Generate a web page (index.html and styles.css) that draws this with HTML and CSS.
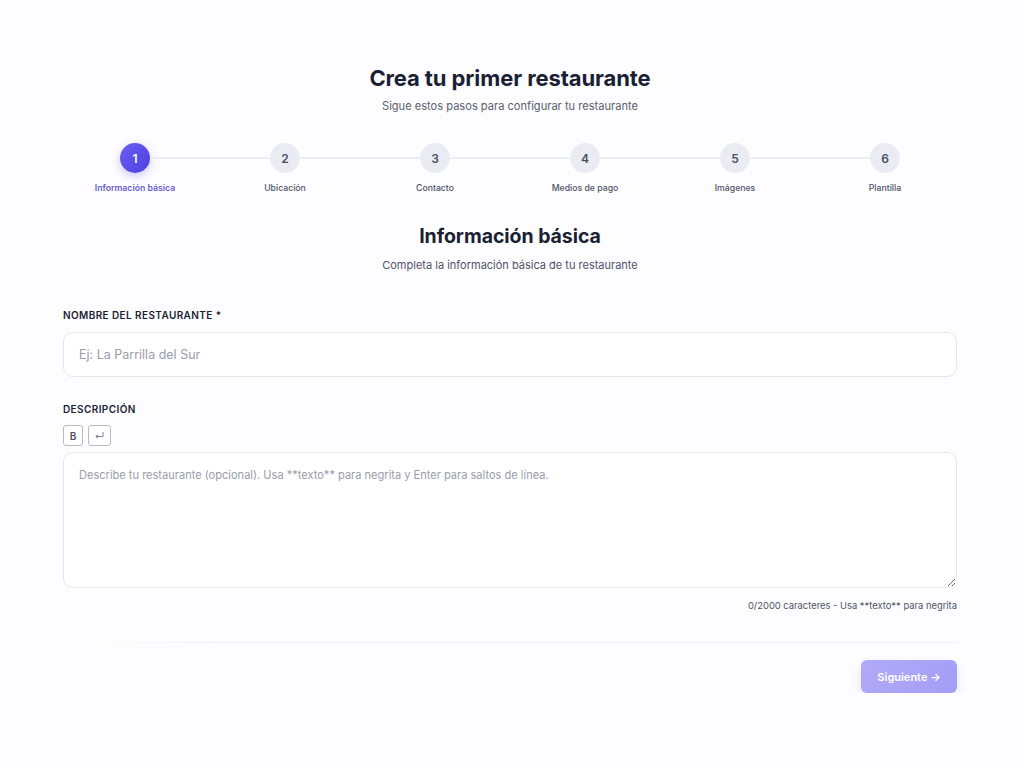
FILE: index.html
```html
<!DOCTYPE html>
<html lang="es">
<head>
<meta charset="utf-8">
<title>Crea tu primer restaurante</title>
<link rel="stylesheet" href="styles.css">
</head>
<body>
<main class="page">
  <header class="head">
    <h1 class="title">Crea tu primer restaurante</h1>
    <p class="subtitle">Sigue estos pasos para configurar tu restaurante</p>
  </header>

  <ol class="stepper">
    <li class="step active"><span class="dot">1</span><span class="label">Información básica</span></li>
    <li class="step"><span class="dot">2</span><span class="label">Ubicación</span></li>
    <li class="step"><span class="dot">3</span><span class="label">Contacto</span></li>
    <li class="step"><span class="dot">4</span><span class="label">Medios de pago</span></li>
    <li class="step"><span class="dot">5</span><span class="label">Imágenes</span></li>
    <li class="step last"><span class="dot">6</span><span class="label">Plantilla</span></li>
  </ol>

  <section class="form">
    <div class="section-head">
      <h2 class="section-title">Información básica</h2>
      <p class="section-sub">Completa la información básica de tu restaurante</p>
    </div>

    <div class="field">
      <label class="field-label">Nombre del restaurante *</label>
      <input class="input" type="text" placeholder="Ej: La Parrilla del Sur">
    </div>

    <div class="field field-desc">
      <label class="field-label">Descripción</label>
      <div class="toolbar">
        <button class="tool tool-b" type="button">B</button>
        <button class="tool tool-enter" type="button">↵</button>
      </div>
      <textarea class="textarea" placeholder="Describe tu restaurante (opcional). Usa **texto** para negrita y Enter para saltos de línea."></textarea>
      <div class="counter">0/2000 caracteres - Usa **texto** para negrita</div>
    </div>

    <div class="divider"></div>

    <div class="actions">
      <button class="next" type="button">Siguiente →</button>
    </div>
  </section>
</main>
</body>
</html>
```

FILE: styles.css
```css
* { box-sizing: border-box; }
html, body { margin: 0; padding: 0; }
body {
  background: #fdfcfe;
  font-family: Inter, "Noto Sans", "Liberation Sans", sans-serif;
  color: #1b1f33;
  padding-right: 4px;
}
.page {
  width: 894px;
  margin: 0 auto;
  padding-top: 63px;
}
.head { text-align: center; }
.title {
  margin: 0;
  font-size: 22px;
  line-height: 30px;
  font-weight: 700;
  letter-spacing: -0.1px;
  color: #1b1f33;
}
.subtitle {
  margin: 5px 0 0;
  font-size: 11.1px;
  line-height: 16px;
  color: #5b6070;
}

.stepper {
  list-style: none;
  margin: 29px 0 0 -3px;
  padding: 0;
  width: 900px;
  display: grid;
  grid-template-columns: repeat(6, 150px);
}
.step {
  position: relative;
  display: flex;
  flex-direction: column;
  align-items: center;
}
.step::after {
  content: "";
  position: absolute;
  top: 14px;
  left: calc(50% + 15px);
  width: 120px;
  height: 2px;
  background: #ececf4;
}
.step.last::after { display: none; }
.dot {
  width: 30px;
  height: 30px;
  border-radius: 50%;
  background: #ebecf3;
  color: #4a5064;
  font-size: 12px;
  font-weight: 600;
  display: flex;
  align-items: center;
  justify-content: center;
}
.step.active .dot {
  background: linear-gradient(135deg, #6a5ff3, #4d3fe0);
  color: #fff;
  box-shadow: 0 3px 8px rgba(90, 76, 230, 0.3);
}
.label {
  margin-top: 9px;
  font-size: 8.7px;
  line-height: 12px;
  font-weight: 500;
  color: #4f5466;
}
.step.active .label { color: #6a5fd6; font-weight: 600; }

.section-head { text-align: center; margin-top: 29px; }
.section-title {
  margin: 0;
  font-size: 19.5px;
  line-height: 26px;
  font-weight: 700;
  letter-spacing: -0.05px;
  color: #1b1f33;
}
.section-sub {
  margin: 8px 0 0;
  font-size: 11px;
  line-height: 16px;
  color: #4f5466;
}

.field { margin-top: 35px; }
.field-desc { margin-top: 25px; }
.field-label {
  display: block;
  font-size: 10px;
  line-height: 14px;
  font-weight: 600;
  letter-spacing: 0.4px;
  text-transform: uppercase;
  color: #1b1f33;
}
.input {
  display: block;
  width: 100%;
  margin-top: 10px;
  height: 45px;
  padding: 0 15px;
  border: 1px solid #e6e6ee;
  border-radius: 10px;
  background: #fff;
  font-family: inherit;
  font-size: 12.5px;
  color: #1b1f33;
  outline: none;
}
.input::placeholder { color: #9a9daa; }

.toolbar {
  display: flex;
  gap: 5px;
  margin-top: 9px;
}
.tool {
  height: 21px;
  padding: 0;
  border: 1px solid #b8bbc6;
  border-radius: 3px;
  background: #fff;
  font-family: inherit;
  font-size: 10px;
  font-weight: 600;
  color: #4a5064;
  display: flex;
  align-items: center;
  justify-content: center;
}
.tool-b { width: 20px; }
.tool-enter { width: 23px; font-weight: 400; color: #70748a; }

.textarea {
  display: block;
  width: 100%;
  margin-top: 6px;
  height: 136px;
  padding: 14px 15px;
  border: 1px solid #e6e6ee;
  border-radius: 10px;
  background: #fff;
  font-family: inherit;
  font-size: 11.05px;
  line-height: 16px;
  color: #1b1f33;
  resize: vertical;
  outline: none;
}
.textarea::placeholder { color: #9a9daa; }
.counter {
  margin-top: 12px;
  text-align: right;
  font-size: 9.4px;
  line-height: 12px;
  color: #4f5466;
}

.divider {
  margin: 30px 0 0 24px;
  height: 1px;
  background: linear-gradient(90deg, rgba(236,236,244,0), #eeeef5 15%, #eeeef5);
}
.actions {
  display: flex;
  justify-content: flex-end;
  margin-top: 17px;
}
.next {
  width: 96px;
  height: 33px;
  border: none;
  border-radius: 6px;
  background: linear-gradient(135deg, #b2aaf8, #a39df6);
  color: #fff;
  font-family: inherit;
  font-size: 11px;
  font-weight: 600;
  box-shadow: 0 4px 10px rgba(120, 110, 240, 0.18);
}
```
